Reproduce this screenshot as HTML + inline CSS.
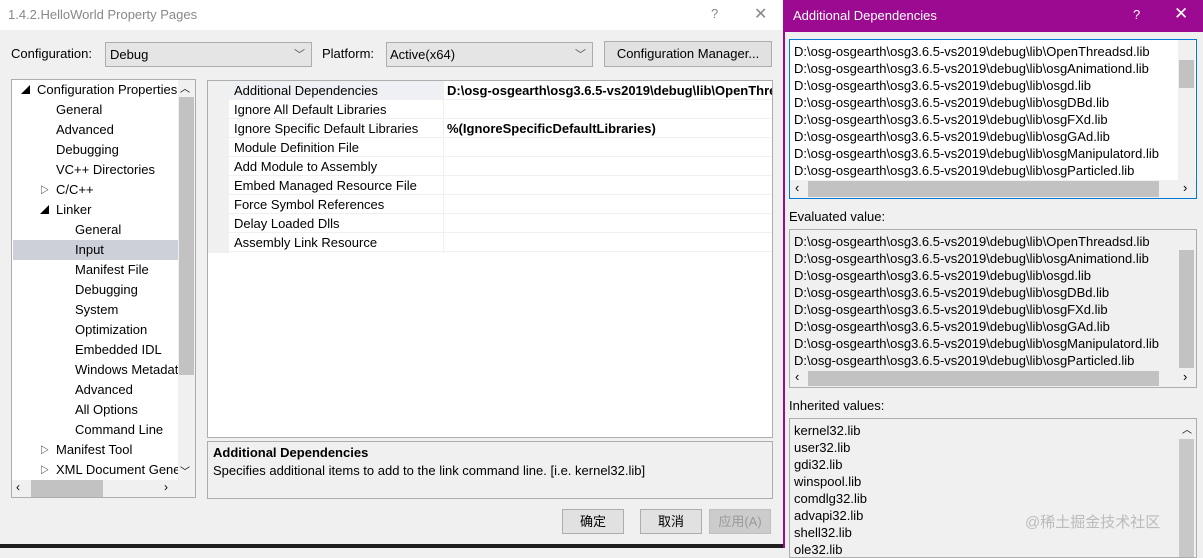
<!DOCTYPE html>
<html><head><meta charset="utf-8"><style>
*{margin:0;padding:0;box-sizing:border-box}
body{width:1203px;height:548px;overflow:hidden;background:#f0f0f0;font-family:"Liberation Sans","Noto Sans CJK SC",sans-serif;font-size:13px;color:#000;position:relative}
.a{position:absolute;white-space:nowrap}
.t{position:absolute;white-space:nowrap;line-height:20px}
.box{position:absolute;border:1px solid #adadad}
.btn{position:absolute;background:#e1e1e1;border:1px solid #adadad;text-align:center;line-height:23px}
.row{position:absolute;left:21px;width:545px;height:19px;border-bottom:1px solid #f0f0f0;overflow:hidden}
.row span{position:absolute;left:5px;line-height:19px;white-space:nowrap}
.lines div{line-height:17px;height:17px;white-space:nowrap}
</style></head><body>
<div class="a" style="left:0;top:0;width:783px;height:30px;background:#fff"></div>
<div class="a" style="left:8px;top:7px;color:#888;font-size:13px">1.4.2.HelloWorld Property Pages</div>
<div class="a" style="left:711px;top:6px;color:#888">?</div>
<div class="a" style="left:754px;top:4px;color:#888;font-size:16px">✕</div>

<div class="a" style="left:11px;top:46px">Configuration:</div>
<div class="box" style="left:105px;top:42px;width:207px;height:25px;background:#e5e5e5"><span class="a" style="left:4px;top:4px">Debug</span><span class="a" style="right:6px;top:3px;color:#555;font-size:11px">﹀</span></div>
<div class="a" style="left:322px;top:46px">Platform:</div>
<div class="box" style="left:386px;top:42px;width:207px;height:25px;background:#e5e5e5"><span class="a" style="left:3px;top:4px">Active(x64)</span><span class="a" style="right:6px;top:3px;color:#555;font-size:11px">﹀</span></div>
<div class="btn" style="left:604px;top:41px;width:168px;height:26px">Configuration Manager...</div>

<div class="box" style="left:11px;top:79px;width:185px;height:419px;background:#fff;overflow:hidden">
 <div class="a" style="left:1px;top:160px;width:165px;height:20px;background:#cdcfd9"></div>
 <div class="a" style="left:166px;top:0;width:17px;height:400px;background:#f0f0f0"></div>
 <div class="a" style="left:167px;top:17px;width:15px;height:278px;background:#c2c2c2"></div>
 <div class="a" style="left:168px;top:0px;font-size:10px">︿</div>
 <div class="a" style="left:168px;top:383px;font-size:10px">﹀</div>
 <div class="a" style="left:0;top:400px;width:183px;height:17px;background:#f0f0f0"></div>
 <div class="a" style="left:19px;top:400px;width:72px;height:17px;background:#c2c2c2"></div>
 <div class="a" style="left:4px;top:400px;font-size:12px">‹</div>
 <div class="a" style="left:152px;top:400px;font-size:12px">›</div>
 <div style="position:absolute;left:0;top:0;width:166px;overflow:hidden;height:400px">
 <div class="t" style="left:9px;top:0;font-size:9px">◢</div><div class="t" style="left:25px;top:0">Configuration Properties</div>
 <div class="t" style="left:44px;top:20px">General</div>
 <div class="t" style="left:44px;top:40px">Advanced</div>
 <div class="t" style="left:44px;top:60px">Debugging</div>
 <div class="t" style="left:44px;top:80px">VC++ Directories</div>
 <div class="t" style="left:28px;top:100px;font-size:9px">▷</div><div class="t" style="left:44px;top:100px">C/C++</div>
 <div class="t" style="left:28px;top:120px;font-size:9px">◢</div><div class="t" style="left:44px;top:120px">Linker</div>
 <div class="t" style="left:63px;top:140px">General</div>
 <div class="t" style="left:63px;top:160px">Input</div>
 <div class="t" style="left:63px;top:180px">Manifest File</div>
 <div class="t" style="left:63px;top:200px">Debugging</div>
 <div class="t" style="left:63px;top:220px">System</div>
 <div class="t" style="left:63px;top:240px">Optimization</div>
 <div class="t" style="left:63px;top:260px">Embedded IDL</div>
 <div class="t" style="left:63px;top:280px">Windows Metadata</div>
 <div class="t" style="left:63px;top:300px">Advanced</div>
 <div class="t" style="left:63px;top:320px">All Options</div>
 <div class="t" style="left:63px;top:340px">Command Line</div>
 <div class="t" style="left:28px;top:360px;font-size:9px">▷</div><div class="t" style="left:44px;top:360px">Manifest Tool</div>
 <div class="t" style="left:28px;top:380px;font-size:9px">▷</div><div class="t" style="left:44px;top:380px">XML Document Generator</div>
 </div>
</div>

<div class="box" style="left:207px;top:80px;width:566px;height:358px;background:#fff;overflow:hidden">
 <div class="a" style="left:0;top:0;width:21px;height:172px;background:#f0f0f0"></div>
 <div class="a" style="left:21px;top:0;width:214px;height:19px;background:#eef0f4"></div>
 <div class="row" style="top:0"><span>Additional Dependencies</span><span style="left:218px;font-weight:bold">D:\osg-osgearth\osg3.6.5-vs2019\debug\lib\OpenThreadsd.lib</span></div>
 <div class="row" style="top:19px"><span>Ignore All Default Libraries</span></div>
 <div class="row" style="top:38px"><span>Ignore Specific Default Libraries</span><span style="left:218px;font-weight:bold">%(IgnoreSpecificDefaultLibraries)</span></div>
 <div class="row" style="top:57px"><span>Module Definition File</span></div>
 <div class="row" style="top:76px"><span>Add Module to Assembly</span></div>
 <div class="row" style="top:95px"><span>Embed Managed Resource File</span></div>
 <div class="row" style="top:114px"><span>Force Symbol References</span></div>
 <div class="row" style="top:133px"><span>Delay Loaded Dlls</span></div>
 <div class="row" style="top:152px"><span>Assembly Link Resource</span></div>
 <div class="a" style="left:235px;top:0;width:1px;height:172px;background:#f0f0f0"></div>
</div>
<div class="box" style="left:207px;top:441px;width:566px;height:58px;background:#f0f0f0">
 <div class="a" style="left:5px;top:3px;font-weight:bold">Additional Dependencies</div>
 <div class="a" style="left:5px;top:21px">Specifies additional items to add to the link command line. [i.e. kernel32.lib]</div>
</div>
<div class="btn" style="left:562px;top:509px;width:62px;height:25px">确定</div>
<div class="btn" style="left:640px;top:509px;width:62px;height:25px">取消</div>
<div class="btn" style="left:709px;top:509px;width:62px;height:25px;color:#999;background:#ccc;border-color:#bfbfbf">应用(A)</div>
<div class="a" style="left:0;top:544px;width:785px;height:4px;background:#1e1e1e"></div>

<div class="a" style="left:783px;top:0;width:420px;height:548px;background:#f0f0f0;border-left:2px solid #9b0a91"></div>
<div class="a" style="left:783px;top:0;width:420px;height:32px;background:#9b0a91"></div>
<div class="a" style="left:793px;top:8px;color:#fff;font-size:13px">Additional Dependencies</div>
<div class="a" style="left:1133px;top:7px;color:#fff">?</div>
<div class="a" style="left:1174px;top:4px;color:#fff;font-size:17px">✕</div>

<div class="a" style="left:789px;top:39px;width:408px;height:160px;border:1px solid #0078d7;background:#fff;overflow:hidden">
 <div class="lines a" style="left:4px;top:3px">
  <div>D:\osg-osgearth\osg3.6.5-vs2019\debug\lib\OpenThreadsd.lib</div>
  <div>D:\osg-osgearth\osg3.6.5-vs2019\debug\lib\osgAnimationd.lib</div>
  <div>D:\osg-osgearth\osg3.6.5-vs2019\debug\lib\osgd.lib</div>
  <div>D:\osg-osgearth\osg3.6.5-vs2019\debug\lib\osgDBd.lib</div>
  <div>D:\osg-osgearth\osg3.6.5-vs2019\debug\lib\osgFXd.lib</div>
  <div>D:\osg-osgearth\osg3.6.5-vs2019\debug\lib\osgGAd.lib</div>
  <div>D:\osg-osgearth\osg3.6.5-vs2019\debug\lib\osgManipulatord.lib</div>
  <div>D:\osg-osgearth\osg3.6.5-vs2019\debug\lib\osgParticled.lib</div>
 </div>
 <div class="a" style="left:388px;top:0;width:17px;height:140px;background:#f0f0f0"></div>
 <div class="a" style="left:389px;top:20px;width:15px;height:28px;background:#c2c2c2"></div>
 <div class="a" style="left:0;top:140px;width:406px;height:18px;background:#f0f0f0"></div>
 <div class="a" style="left:18px;top:141px;width:351px;height:16px;background:#c2c2c2"></div>
 <div class="a" style="left:5px;top:140px;font-size:13px">‹</div>
 <div class="a" style="left:393px;top:140px;font-size:13px">›</div>
</div>

<div class="a" style="left:789px;top:209px">Evaluated value:</div>
<div class="box" style="left:789px;top:229px;width:408px;height:159px;overflow:hidden">
 <div class="lines a" style="left:4px;top:3px">
  <div>D:\osg-osgearth\osg3.6.5-vs2019\debug\lib\OpenThreadsd.lib</div>
  <div>D:\osg-osgearth\osg3.6.5-vs2019\debug\lib\osgAnimationd.lib</div>
  <div>D:\osg-osgearth\osg3.6.5-vs2019\debug\lib\osgd.lib</div>
  <div>D:\osg-osgearth\osg3.6.5-vs2019\debug\lib\osgDBd.lib</div>
  <div>D:\osg-osgearth\osg3.6.5-vs2019\debug\lib\osgFXd.lib</div>
  <div>D:\osg-osgearth\osg3.6.5-vs2019\debug\lib\osgGAd.lib</div>
  <div>D:\osg-osgearth\osg3.6.5-vs2019\debug\lib\osgManipulatord.lib</div>
  <div>D:\osg-osgearth\osg3.6.5-vs2019\debug\lib\osgParticled.lib</div>
 </div>
 <div class="a" style="left:389px;top:20px;width:15px;height:118px;background:#c2c2c2"></div>
 <div class="a" style="left:18px;top:141px;width:351px;height:15px;background:#c2c2c2"></div>
 <div class="a" style="left:5px;top:139px;font-size:13px">‹</div>
 <div class="a" style="left:393px;top:139px;font-size:13px">›</div>
</div>

<div class="a" style="left:789px;top:398px">Inherited values:</div>
<div class="box" style="left:789px;top:418px;width:408px;height:140px;overflow:hidden">
 <div class="lines a" style="left:4px;top:3px">
  <div>kernel32.lib</div><div>user32.lib</div><div>gdi32.lib</div><div>winspool.lib</div><div>comdlg32.lib</div><div>advapi32.lib</div><div>shell32.lib</div><div>ole32.lib</div>
 </div>
 <div class="a" style="left:389px;top:20px;width:15px;height:120px;background:#c8c8c8"></div>
 <div class="a" style="left:392px;top:2px;font-size:10px">︿</div>
</div>
<div class="a" style="left:1025px;top:511px;color:#bbb;font-size:15px">@稀土掘金技术社区</div>
</body></html>
